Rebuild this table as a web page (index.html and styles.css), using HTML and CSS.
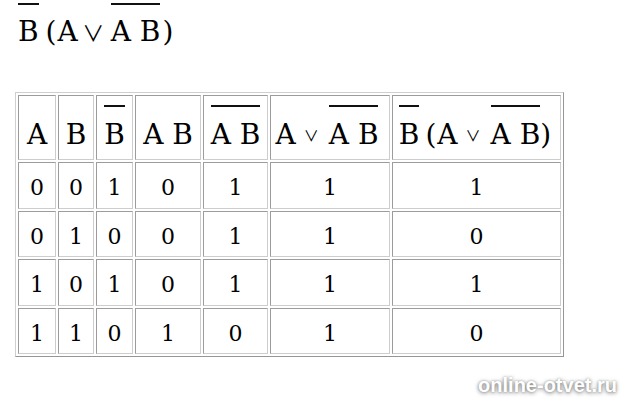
FILE: index.html
```html
<!DOCTYPE html>
<html>
<head>
<meta charset="utf-8">
<link rel="stylesheet" href="styles.css">
</head>
<body>
<div class="page">
  <div class="formula"><span class="ov">B</span><span class="par">(</span>A<span class="or or-big">∨</span><span class="ov">A B</span><span class="par par-r">)</span></div>
  <table class="tt">
    <tr class="hrow">
      <th class="c1">A</th>
      <th class="c2">B</th>
      <th class="c3"><span class="ov">B</span></th>
      <th class="c4">A B</th>
      <th class="c5"><span class="ov">A B</span></th>
      <th class="c6">A<span class="or">∨</span><span class="ov">A B</span></th>
      <th class="c7"><span class="ov">B</span><span class="par">(</span>A<span class="or">∨</span><span class="ov">A B</span><span class="par par-r">)</span></th>
    </tr>
    <tr class="drow"><td>0</td><td>0</td><td>1</td><td>0</td><td>1</td><td>1</td><td>1</td></tr>
    <tr class="drow"><td>0</td><td>1</td><td>0</td><td>0</td><td>1</td><td>1</td><td>0</td></tr>
    <tr class="drow"><td>1</td><td>0</td><td>1</td><td>0</td><td>1</td><td>1</td><td>1</td></tr>
    <tr class="drow"><td>1</td><td>1</td><td>0</td><td>1</td><td>0</td><td>1</td><td>0</td></tr>
  </table>
  <div class="mark">online-otvet.ru</div>
</div>
</body>
</html>
```

FILE: styles.css
```css
html, body {
  margin: 0;
  padding: 0;
  background: #fff;
}
.page {
  position: relative;
  width: 625px;
  height: 400px;
  overflow: hidden;
  font-family: "DejaVu Serif", "Liberation Serif", serif;
  color: #000;
}
.formula {
  margin: 3px 0 0 18px;
  font-size: 28px;
  line-height: 1;
  white-space: nowrap;
}
.formula .ov {
  padding-top: 13px;
}
.ov {
  display: inline-block;
  border-top: 2px solid #111;
  padding-top: 14px;
  line-height: 1;
}
.par {
  margin-left: 6px;
  margin-right: 1px;
}
.par-r {
  margin-left: 0;
  margin-right: 0;
}
.formula .par {
  margin-left: 7px;
}
.formula .par-r {
  margin-left: 2px;
}
.or {
  display: inline-flex;
  justify-content: center;
  width: 9px;
  margin: 0 13px 0 11px;
  font-family: "Noto Sans CJK JP", "DejaVu Sans", sans-serif;
  font-size: 15px;
  line-height: 1;
  vertical-align: 3px;
}
.or-big {
  width: 13px;
  margin: 0 11px 0 9px;
  font-size: 22px;
  vertical-align: 0;
}
.tt {
  margin: 46px 0 0 15px;
  border-collapse: separate;
  border-spacing: 2px;
  border: 1px solid;
  border-color: #cfcfcf #969696 #969696 #cfcfcf;
}
.tt th, .tt td {
  box-sizing: border-box;
  border: 1px solid;
  border-color: #9c9c9c #cdcdcd #cdcdcd #9c9c9c;
  padding: 0;
  text-align: center;
  white-space: nowrap;
}
.tt th {
  font-weight: normal;
  font-size: 28px;
  line-height: 1;
  vertical-align: bottom;
  padding-bottom: 10px;
}
.tt td {
  font-size: 22px;
  line-height: 1;
  vertical-align: middle;
  padding-top: 6px;
}
.hrow { height: 65px; }
.drow { height: 46.5px; }
.c1 { width: 38px; }
.c2 { width: 36px; }
.c3 { width: 37px; }
.c4 { width: 66px; }
.c5 { width: 65px; }
.c6 { width: 120px; }
.c7 { width: 169px; }
.tt th.c6 { padding-right: 6px; }
.tt th.c7 { padding-right: 3px; }
.mark {
  position: absolute;
  right: 8px;
  top: 374px;
  font-family: "Liberation Sans", Arial, sans-serif;
  font-weight: bold;
  font-size: 20px;
  color: #fff;
  text-shadow: 0 1px 4px rgba(0, 0, 0, 0.55), 0 0 2px rgba(0, 0, 0, 0.25);
}
```
